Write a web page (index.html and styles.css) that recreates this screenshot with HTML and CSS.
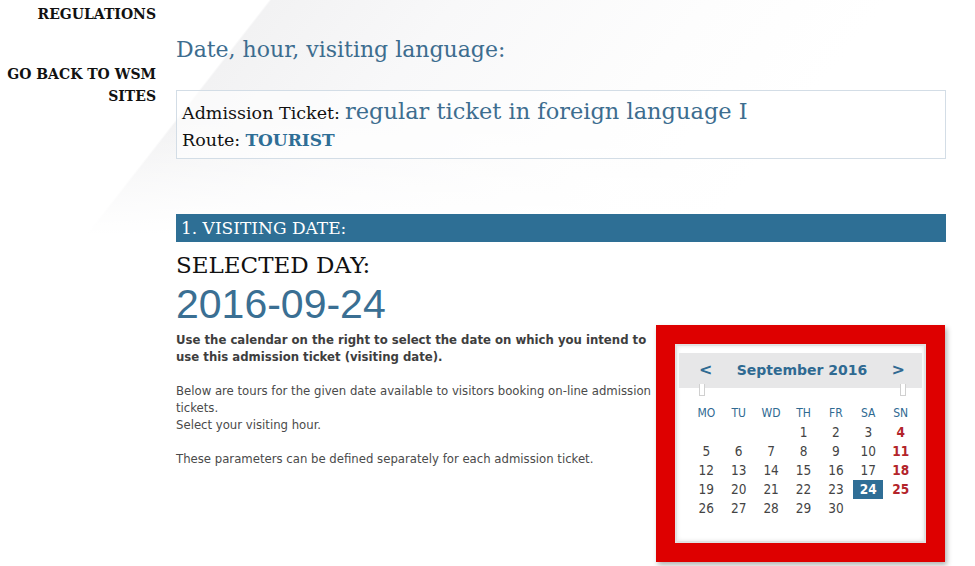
FILE: index.html
```html
<!DOCTYPE html>
<html lang="en">
<head>
    <meta charset="UTF-8">
    <meta name="viewport" content="width=device-width, initial-scale=1.0">
    <title>Date, hour, visiting language</title>
    <link rel="stylesheet" href="styles.css">
</head>
<body>
    <div class="page">
        <nav class="side-menu">
            <a href="#">Regulations</a>
            <a href="#">Go back to WSM sites</a>
        </nav>

        <main class="content">
            <h1 class="page-title">Date, hour, visiting language:</h1>

            <div class="ticket-box">
                <div class="ticket-line">
                    <span class="label">Admission Ticket:</span>
                    <span class="ticket-name">regular ticket in foreign language I</span>
                </div>
                <div class="ticket-line">
                    <span class="label">Route:</span>
                    <span class="route-name">TOURIST</span>
                </div>
            </div>

            <h2 class="section-bar">1. Visiting date:</h2>

            <div class="date-section">
                <div class="date-info">
                    <h3 class="selected-label">SELECTED DAY:</h3>
                    <div class="selected-date">2016-09-24</div>
                    <p class="info-text first">
                        <strong>Use the calendar on the right to select the date on which you intend to use this admission ticket (visiting date).</strong>
                    </p>
                    <p class="info-text">
                        Below are tours for the given date available to visitors booking on-line admission tickets.<br>
                        Select your visiting hour.
                    </p>
                    <p class="info-text">
                        These parameters can be defined separately for each admission ticket.
                    </p>
                </div>

                <div class="calendar-frame">
                    <div class="calendar">
                        <div class="calendar-head">
                            <a href="#" class="cal-nav">&lt;</a>
                            <span class="cal-month">September 2016</span>
                            <a href="#" class="cal-nav">&gt;</a>
                            <span class="ring ring-left"></span>
                            <span class="ring ring-right"></span>
                        </div>
                        <div class="cal-grid" id="calGrid">
                            <span class="day-name">MO</span>
                            <span class="day-name">TU</span>
                            <span class="day-name">WD</span>
                            <span class="day-name">TH</span>
                            <span class="day-name">FR</span>
                            <span class="day-name">SA</span>
                            <span class="day-name">SN</span>
                        </div>
                    </div>
                </div>
            </div>
        </main>
    </div>

    <script>
        // Build September 2016 (starts on Thursday)
        const calGrid = document.getElementById('calGrid');
        const firstDay = 3;
        const daysInMonth = 30;
        const selectedDay = 24;

        for (let i = 0; i < firstDay; i++) {
            calGrid.appendChild(document.createElement('span'));
        }

        for (let d = 1; d <= daysInMonth; d++) {
            const cell = document.createElement('span');
            cell.classList.add('day');
            cell.textContent = d;
            if ((firstDay + d - 1) % 7 === 6) {
                cell.classList.add('sunday');
            }
            if (d === selectedDay) {
                cell.classList.add('selected');
            }
            calGrid.appendChild(cell);
        }
    </script>
</body>
</html>
```

FILE: styles.css
```css
body {
    margin: 0;
    font-family: 'DejaVu Serif', serif;
    background-color: #fff;
    background-image:
        linear-gradient(to bottom, rgba(255, 255, 255, 0) 120px, #fff 235px),
        linear-gradient(128deg, #fff 0, #fff 212px, #f2f2f3 214px, #f8f8f9 360px, #fdfdfd 560px, #fff 700px);
    background-repeat: no-repeat;
    height: 566px;
    overflow: hidden;
}

.page {
    display: flex;
}

.side-menu {
    width: 156px;
    display: flex;
    flex-direction: column;
    align-items: flex-end;
    text-align: right;
    padding-top: 3px;
}

.side-menu a {
    color: #111;
    text-decoration: none;
    text-transform: uppercase;
    font-weight: bold;
    font-size: 14px;
    line-height: 22px;
    margin-bottom: 38px;
}

.content {
    margin-left: 20px;
    width: 770px;
}

.page-title {
    margin: 35px 0 25px;
    font-size: 22px;
    font-weight: normal;
    color: #3d6d8f;
    line-height: 30px;
}

.ticket-box {
    border: 1px solid #d3dde6;
    padding: 7px 5px 4px;
    background-color: rgba(255, 255, 255, 0.6);
}

.ticket-line {
    line-height: 26px;
}

.ticket-line .label {
    font-size: 17.5px;
    color: #111;
}

.ticket-name {
    font-size: 22.5px;
    color: #3d6d8f;
}

.route-name {
    font-size: 17px;
    font-weight: bold;
    color: #2f6e96;
}

.section-bar {
    margin: 55px 0 0;
    height: 28px;
    line-height: 28px;
    padding-left: 5px;
    background-color: #2e6f95;
    color: #fff;
    font-size: 17px;
    font-weight: normal;
    text-transform: uppercase;
}

.date-section {
    display: flex;
    justify-content: space-between;
}

.date-info {
    width: 478px;
}

.selected-label {
    margin: 10px 0 0;
    font-size: 23px;
    font-weight: normal;
    color: #111;
    line-height: 26px;
}

.selected-date {
    font-family: 'Liberation Sans', Arial, sans-serif;
    font-size: 41px;
    color: #3a6f93;
    line-height: 44px;
    margin-top: 4px;
}

.info-text {
    font-family: 'DejaVu Sans', Verdana, sans-serif;
    font-stretch: condensed;
    font-size: 13px;
    line-height: 17px;
    color: #4a4a4a;
    margin: 0 0 17px;
}

.info-text.first {
    margin-top: 5px;
}

.info-text strong {
    color: #3e3e3e;
}

.calendar-frame {
    margin-top: 83px;
    margin-right: 1px;
    width: 251px;
    height: 199px;
    border: 19px solid #de0000;
    box-shadow: 2px 3px 5px rgba(0, 0, 0, 0.3);
    background-color: #fff;
}

.calendar {
    height: 100%;
    box-sizing: border-box;
    border: 2px solid #e2e2e2;
    box-shadow: inset 0 0 4px rgba(0, 0, 0, 0.12);
    background-color: #fff;
    padding: 7px 2px 0;
}

.calendar-head {
    position: relative;
    height: 35px;
    background-color: #e7e7e8;
    display: flex;
    align-items: center;
    justify-content: space-between;
    padding: 0 17px 2px 20px;
    box-sizing: border-box;
    font-family: 'DejaVu Sans', Verdana, sans-serif;
    color: #2f6a92;
}

.cal-nav {
    color: #2f6a92;
    text-decoration: none;
    font-weight: bold;
    font-size: 16px;
}

.cal-month {
    font-weight: bold;
    font-size: 14px;
}

.ring {
    position: absolute;
    bottom: -8px;
    width: 4px;
    height: 11px;
    background-color: #fff;
    border: 1px solid #d0d0d0;
    border-top: none;
}

.ring-left {
    left: 20px;
}

.ring-right {
    right: 16px;
}

.cal-grid {
    display: grid;
    grid-template-columns: repeat(7, 32.4px);
    grid-auto-rows: 19px;
    justify-content: center;
    margin-top: 16px;
    padding-left: 6px;
    font-family: 'DejaVu Sans', Verdana, sans-serif;
    font-stretch: condensed;
    text-align: center;
}

.day-name {
    font-size: 12px;
    line-height: 19px;
    color: #2f6a92;
    margin-bottom: 1px;
}

.day {
    font-size: 13.5px;
    line-height: 19px;
    color: #444;
}

.day.sunday {
    color: #b3242a;
    font-weight: bold;
}

.day.selected {
    background-color: #2f6e96;
    color: #fff;
    font-weight: bold;
    margin: 0 1px;
}
```
